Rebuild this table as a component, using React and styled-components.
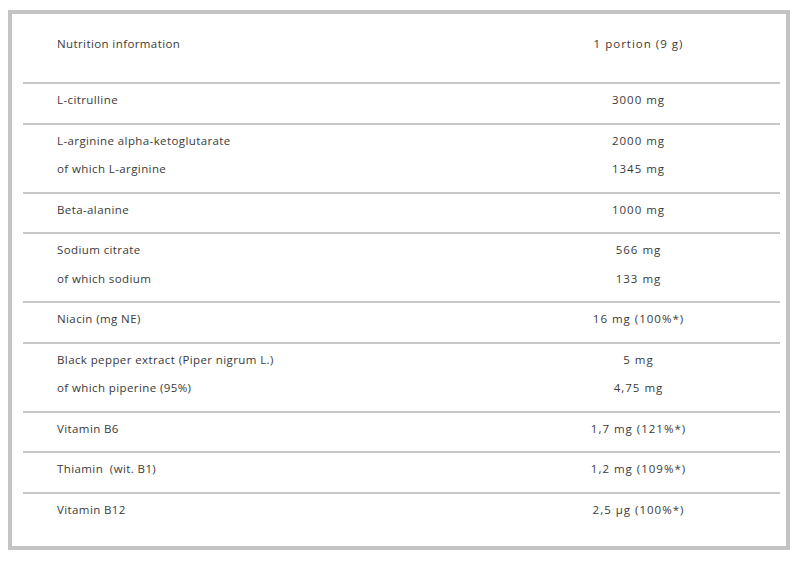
import styled, { createGlobalStyle } from "styled-components";

const GlobalStyle = createGlobalStyle`
  html, body {
    margin: 0;
    padding: 0;
    background: #fff;
  }
  body {
    font-family: "Open Sans", "Liberation Sans", sans-serif;
    color: #3a3a3a;
  }
`;

const Frame = styled.div`
  box-sizing: border-box;
  width: 782px;
  height: 540px;
  margin: 10px 0 0 8px;
  border: 4px solid #c4c4c4;
  padding: 0 6px 0 11px;
  background: #fff;
`;

const Table = styled.table`
  width: 100%;
  border-collapse: collapse;
  font-size: 11.5px;
  line-height: 18px;
  color: #3a3a3a;
`;

const Row = styled.tr`
  border-top: ${(p) => (p.$first ? "none" : "2px solid #c8c8c8")};
`;

const NameCell = styled.td`
  width: 440px;
  padding: ${(p) => (p.$head ? "21px 0 29px 34px" : "7px 0 13.5px 34px")};
  vertical-align: top;
  text-align: left;
  letter-spacing: 0.4px;
`;

const ValueCell = styled.td`
  padding: ${(p) => (p.$head ? "21px 0 29px 0" : "7px 0 13.5px 0")};
  vertical-align: top;
  text-align: center;
  letter-spacing: 1px;
`;

const Line = styled.div`
  & + & {
    margin-top: 10.5px;
  }
`;

const rows = [
  [["L-citrulline"], ["3000 mg"]],
  [
    ["L-arginine alpha-ketoglutarate", "of which L-arginine"],
    ["2000 mg", "1345 mg"],
  ],
  [["Beta-alanine"], ["1000 mg"]],
  [
    ["Sodium citrate", "of which sodium"],
    ["566 mg", "133 mg"],
  ],
  [["Niacin (mg NE)"], ["16 mg (100%*)"]],
  [
    ["Black pepper extract (Piper nigrum L.)", "of which piperine (95%)"],
    ["5 mg", "4,75 mg"],
  ],
  [["Vitamin B6"], ["1,7 mg (121%*)"]],
  [["Thiamin\u00a0 (wit. B1)"], ["1,2 mg (109%*)"]],
  [["Vitamin B12"], ["2,5 µg (100%*)"]],
];

const App = () => {
  return (
    <>
      <GlobalStyle />
      <Frame>
        <Table>
          <tbody>
            <Row $first>
              <NameCell $head>Nutrition information</NameCell>
              <ValueCell $head>1 portion (9 g)</ValueCell>
            </Row>
            {rows.map(([names, values], i) => (
              <Row key={i}>
                <NameCell>
                  {names.map((n) => (
                    <Line key={n}>{n}</Line>
                  ))}
                </NameCell>
                <ValueCell>
                  {values.map((v) => (
                    <Line key={v}>{v}</Line>
                  ))}
                </ValueCell>
              </Row>
            ))}
          </tbody>
        </Table>
      </Frame>
    </>
  );
};

export default App;
